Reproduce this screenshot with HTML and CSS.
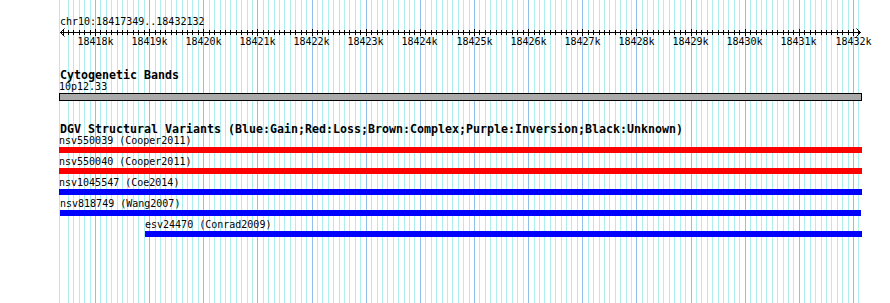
FILE: index.html
```html
<!DOCTYPE html>
<html>
<head>
<meta charset="utf-8">
<title>chr10:18417349..18432132</title>
<link rel="stylesheet" href="styles.css">
</head>
<body>
<div class="canvas">
  <svg class="grid" width="890" height="303" viewBox="0 0 890 303">
    <path id="grid-minor" class="grid-minor" d=""/>
    <path id="grid-major" class="grid-major" d=""/>
  </svg>
  <div class="content">
    <section class="ruler">
      <div class="ruler-title">chr10:18417349..18432132</div>
      <svg class="ruler-svg" width="890" height="22" viewBox="0 0 890 22">
        <rect x="60" y="4" width="801" height="1" class="ink"/>
        <path id="ticks-minor" class="tick" d=""/>
        <path id="ticks-major" class="tick" d=""/>
        <path class="arrow" d="M64.5 0.5L60.5 4.5L64.5 8.5"/>
        <path class="arrow" d="M856.5 0.5L860.5 4.5L856.5 8.5"/>
        <g class="ruler-labels">
          <text x="95.5" y="17">18418k</text>
          <text x="149.5" y="17">18419k</text>
          <text x="203.5" y="17">18420k</text>
          <text x="257.5" y="17">18421k</text>
          <text x="311.5" y="17">18422k</text>
          <text x="365.5" y="17">18423k</text>
          <text x="419.5" y="17">18424k</text>
          <text x="474.5" y="17">18425k</text>
          <text x="528.5" y="17">18426k</text>
          <text x="582.5" y="17">18427k</text>
          <text x="636.5" y="17">18428k</text>
          <text x="690.5" y="17">18429k</text>
          <text x="744.5" y="17">18430k</text>
          <text x="798.5" y="17">18431k</text>
          <text x="853.5" y="17">18432k</text>
        </g>
      </svg>
    </section>

    <section class="track cyto">
      <div class="track-title">Cytogenetic Bands</div>
      <div class="feature" style="margin-left:0px;width:803px">
        <div class="label">10p12.33</div>
        <div class="band"></div>
      </div>
    </section>

    <section class="track dgv">
      <div class="track-title">DGV Structural Variants (Blue:Gain;Red:Loss;Brown:Complex;Purple:Inversion;Black:Unknown)</div>
      <div class="feature" style="margin-left:0px;width:803px">
        <div class="label">nsv550039 (Cooper2011)</div>
        <div class="bar loss"></div>
      </div>
      <div class="feature" style="margin-left:0px;width:803px">
        <div class="label">nsv550040 (Cooper2011)</div>
        <div class="bar loss"></div>
      </div>
      <div class="feature" style="margin-left:0px;width:803px">
        <div class="label">nsv1045547 (Coe2014)</div>
        <div class="bar gain"></div>
      </div>
      <div class="feature" style="margin-left:1px;width:801px">
        <div class="label">nsv818749 (Wang2007)</div>
        <div class="bar gain"></div>
      </div>
      <div class="feature" style="margin-left:86px;width:717px">
        <div class="label">esv24470 (Conrad2009)</div>
        <div class="bar gain"></div>
      </div>
    </section>
  </div>
</div>
<script src="script.js"></script>
</body>
</html>
```

FILE: styles.css
```css
html, body {
  margin: 0;
  padding: 0;
  background: #ffffff;
}

.canvas {
  position: relative;
  width: 890px;
  height: 303px;
  overflow: hidden;
  font-family: "DejaVu Sans Mono", "Liberation Mono", monospace;
  color: #000000;
}

.grid {
  position: absolute;
  left: 0;
  top: 0;
  display: block;
}

.grid-minor {
  stroke: #afeeee;
  stroke-width: 1;
  fill: none;
  shape-rendering: crispEdges;
}

.grid-major {
  stroke: #8fbfea;
  stroke-width: 1;
  fill: none;
  shape-rendering: crispEdges;
}

.content {
  position: relative;
}

.ruler-title {
  padding: 15px 0 0 60px;
  font-size: 10px;
  line-height: 13px;
  white-space: nowrap;
}

.ruler-svg {
  display: block;
}

.ink {
  fill: #000000;
  shape-rendering: crispEdges;
}

.tick {
  stroke: #000000;
  stroke-width: 1;
  fill: none;
  shape-rendering: crispEdges;
}

.arrow {
  stroke: #000000;
  stroke-width: 1;
  fill: none;
}

.ruler-labels text {
  font-family: "DejaVu Sans Mono", "Liberation Mono", monospace;
  font-size: 10px;
  text-anchor: middle;
  fill: #000000;
}

.track {
  padding-left: 59px;
}

.track-title {
  padding-left: 1px;
  font-weight: bold;
  font-size: 11.63px;
  line-height: 12px;
  white-space: nowrap;
}

.cyto {
  margin-top: 19px;
}

.dgv {
  margin-top: 22px;
}

.feature + .feature {
  margin-top: 3px;
}

.label {
  font-size: 10px;
  line-height: 11px;
  white-space: nowrap;
}

.band {
  box-sizing: border-box;
  height: 8px;
  margin-top: 1px;
  border: 1px solid #000000;
  background: #aaaaaa;
}

.bar {
  height: 6px;
  margin-top: 1px;
}

.loss {
  background: #ff0000;
}

.gain {
  background: #0000ff;
}
```

FILE: script.js
```js
(function () {
  var start = 18417349;
  var x0 = 59.75;
  var scale = 0.054143;
  function col(bp) {
    return Math.round(x0 + (bp - start) * scale) + 0.5;
  }
  var gMinor = 'M59.5 0V303';
  var gMajor = '';
  var tMinor = '';
  var tMajor = '';
  for (var bp = 18417400; bp <= 18432100; bp += 100) {
    var c = col(bp);
    if (bp % 1000 === 0) {
      gMajor += 'M' + c + ' 0V303';
      tMajor += 'M' + c + ' 1V8';
    } else {
      if (bp >= 18417500) {
        gMinor += 'M' + c + ' 0V303';
      }
      tMinor += 'M' + c + ' 2V7';
    }
  }
  document.getElementById('grid-minor').setAttribute('d', gMinor);
  document.getElementById('grid-major').setAttribute('d', gMajor);
  document.getElementById('ticks-minor').setAttribute('d', tMinor);
  document.getElementById('ticks-major').setAttribute('d', tMajor);
})();
```
